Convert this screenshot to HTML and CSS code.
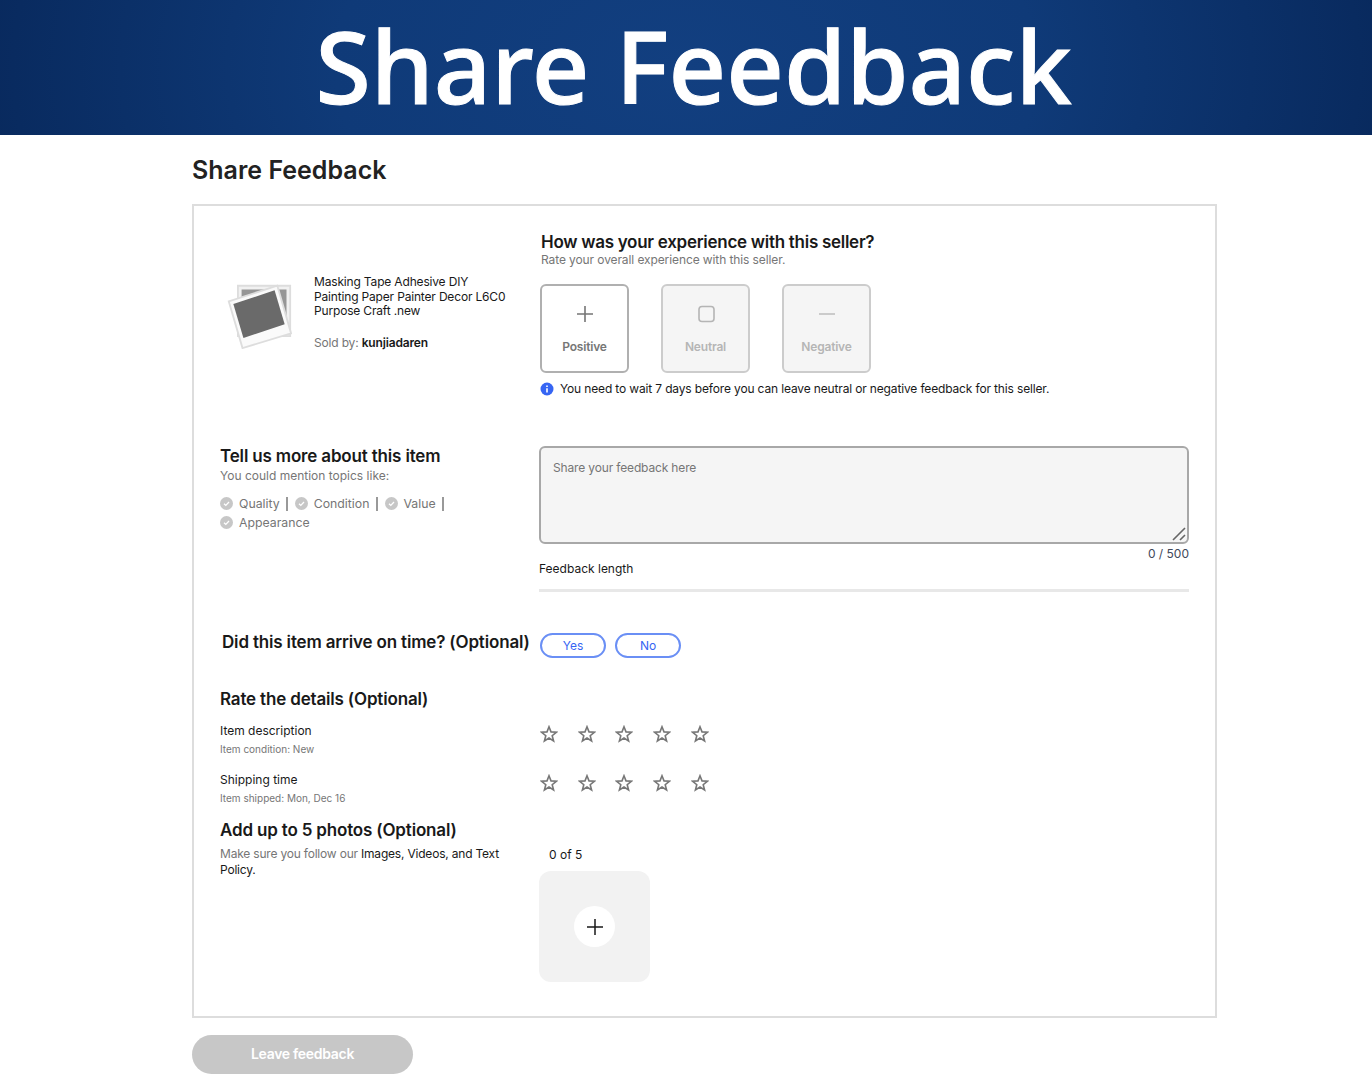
FILE: index.html
```html
<!DOCTYPE html>
<html lang="en">
<head>
  <title>Share Feedback</title>
  <meta charset="utf-8">
  <link rel="stylesheet" href="styles.css">
</head>
<body>
  <header class="banner"><h1>Share Feedback</h1></header>

  <main class="page">
    <h2 class="page_title">Share Feedback</h2>

    <form class="card">
      <!-- seller rating -->
      <section class="row row_seller">
        <div class="item">
          <svg class="item_pic" width="66" height="66" viewBox="0 0 72 72">
            <path d="M13 3 L70 3 L70 58 L13 58 Z" fill="#f1f1f1" stroke="#ddd" stroke-width="2"/>
            <path d="M17 7 L66 7 L66 50 L17 50 Z" fill="#969696"/>
            <path d="M3 20 L56 3 L71 55 L18 71 Z" fill="#fafafa" stroke="#ddd" stroke-width="2"/>
            <path d="M8 23 L53 8 L64 45 L19 60 Z" fill="#6a6a6a"/>
          </svg>
          <div class="item_text">
            <p>Masking Tape Adhesive DIY Painting Paper Painter Decor L6C0 Purpose Craft .new</p>
            <p class="sold"><span class="muted">Sold by:</span> <b>kunjiadaren</b></p>
          </div>
        </div>
        <div class="seller">
          <h3>How was your experience with this seller?</h3>
          <p class="hint">Rate your overall experience with this seller.</p>
          <div class="choices">
            <button type="button" class="choice choice_on">
              <svg width="20" height="20" viewBox="0 0 20 20"><path d="M10 2 V18 M2 10 H18" stroke="#767676" stroke-width="1.6" fill="none"/></svg>
              <span>Positive</span>
            </button>
            <button type="button" class="choice">
              <svg width="20" height="20" viewBox="0 0 20 20"><rect x="3" y="2.5" width="15" height="15" rx="3" stroke="#b5b5b5" stroke-width="1.6" fill="none"/></svg>
              <span>Neutral</span>
            </button>
            <button type="button" class="choice">
              <svg width="20" height="20" viewBox="0 0 20 20"><path d="M2 10 H18" stroke="#c0c0c0" stroke-width="1.6" fill="none"/></svg>
              <span>Negative</span>
            </button>
          </div>
          <p class="notice">
            <svg width="14" height="14" viewBox="0 0 14 14"><circle cx="7" cy="7" r="6.5" fill="#3665f3"/><path d="M7 6.2 V10.4 M7 3.6 V5" stroke="#fff" stroke-width="1.6" fill="none"/></svg>
            You need to wait 7 days before you can leave neutral or negative feedback for this seller.
          </p>
        </div>
      </section>

      <!-- written feedback -->
      <section class="row row_more">
        <div>
          <h3>Tell us more about this item</h3>
          <p class="hint hint_more">You could mention topics like:</p>
          <ul class="topics">
            <li><svg class="tick" width="13" height="13" viewBox="0 0 13 13"><circle cx="6.5" cy="6.5" r="6.5" fill="#c7c7c7"/><path d="M4 6.7 L5.8 8.4 L9 5" stroke="#fff" stroke-width="1.3" fill="none"/></svg>Quality<i></i></li>
            <li><svg class="tick" width="13" height="13" viewBox="0 0 13 13"><circle cx="6.5" cy="6.5" r="6.5" fill="#c7c7c7"/><path d="M4 6.7 L5.8 8.4 L9 5" stroke="#fff" stroke-width="1.3" fill="none"/></svg>Condition<i></i></li>
            <li><svg class="tick" width="13" height="13" viewBox="0 0 13 13"><circle cx="6.5" cy="6.5" r="6.5" fill="#c7c7c7"/><path d="M4 6.7 L5.8 8.4 L9 5" stroke="#fff" stroke-width="1.3" fill="none"/></svg>Value<i></i></li>
            <li><svg class="tick" width="13" height="13" viewBox="0 0 13 13"><circle cx="6.5" cy="6.5" r="6.5" fill="#c7c7c7"/><path d="M4 6.7 L5.8 8.4 L9 5" stroke="#fff" stroke-width="1.3" fill="none"/></svg>Appearance</li>
          </ul>
        </div>
        <div>
          <div class="feedback_wrap">
            <textarea class="feedback" placeholder="Share your feedback here"></textarea>
            <svg class="grip" width="14" height="14" viewBox="0 0 14 14"><path d="M1 13 L13 1 M8 13 L13 8" stroke="#666" stroke-width="1.6" fill="none"/></svg>
          </div>
          <div class="count">0 / 500</div>
          <div class="length_label">Feedback length</div>
          <div class="length_bar"></div>
        </div>
      </section>

      <!-- on time -->
      <section class="row row_time">
        <h3>Did this item arrive on time? (Optional)</h3>
        <div class="pills">
          <button type="button" class="pill">Yes</button>
          <button type="button" class="pill">No</button>
        </div>
      </section>

      <!-- stars -->
      <section class="details">
        <h3>Rate the details (Optional)</h3>
        <div class="row row_rate">
          <div>
            <div class="rate_name">Item description</div>
            <div class="rate_sub">Item condition: New</div>
          </div>
          <div class="stars">
            <svg viewBox="0 0 18 18"><path id="star" d="M9 1.8 L11 6.9 L16.5 7.2 L12.2 10.7 L13.6 16 L9 13 L4.4 16 L5.8 10.7 L1.5 7.2 L7 6.9 Z"/></svg>
            <svg viewBox="0 0 18 18"><use href="#star"/></svg>
            <svg viewBox="0 0 18 18"><use href="#star"/></svg>
            <svg viewBox="0 0 18 18"><use href="#star"/></svg>
            <svg viewBox="0 0 18 18"><use href="#star"/></svg>
          </div>
        </div>
        <div class="row row_rate">
          <div>
            <div class="rate_name">Shipping time</div>
            <div class="rate_sub">Item shipped: Mon, Dec 16</div>
          </div>
          <div class="stars">
            <svg viewBox="0 0 18 18"><use href="#star"/></svg>
            <svg viewBox="0 0 18 18"><use href="#star"/></svg>
            <svg viewBox="0 0 18 18"><use href="#star"/></svg>
            <svg viewBox="0 0 18 18"><use href="#star"/></svg>
            <svg viewBox="0 0 18 18"><use href="#star"/></svg>
          </div>
        </div>
      </section>

      <!-- photos -->
      <section class="row row_photos">
        <div>
          <h3>Add up to 5 photos (Optional)</h3>
          <p class="policy"><span class="muted">Make sure you follow our</span> Images, Videos, and Text Policy.</p>
        </div>
        <div>
          <div class="photo_count">0 of 5</div>
          <div class="photo_box">
            <span class="photo_add">
              <svg width="18" height="18" viewBox="0 0 18 18"><path d="M9 1 V17 M1 9 H17" stroke="#191919" stroke-width="1.5" fill="none"/></svg>
            </span>
          </div>
        </div>
      </section>
    </form>

    <button type="button" class="submit">Leave feedback</button>
  </main>
</body>
</html>
```

FILE: styles.css
```css
*, ::before, ::after {
  box-sizing: border-box;
  margin: 0; padding: 0;
}

body {
  font-family: "Inter", "Liberation Sans", sans-serif;
  font-size: 12px;
  color: #191919;
  background: #fff;
}

.banner {
  height: 135px;
  padding-left: 15px;
  background: radial-gradient(ellipse 780px 500px at 50% 50%, #123f80 0%, #0f3a78 45%, #072658 100%);
  text-align: center;
}
.banner h1 {
  font-family: "Noto Sans", sans-serif;
  font-size: 100.5px;
  font-weight: 500;
  line-height: 131px;
  color: #fff;
  -webkit-text-stroke: 1px #fff;
}

.page {
  width: 1025px;
  margin-left: 192px;
}
.page_title {
  font-size: 25px;
  font-weight: 600;
  line-height: 30px;
  margin-top: 20px;
  color: #222;
}

.card {
  height: 814px;
  margin-top: 19px;
  padding: 26px 26px 0;
  border: 2px solid #ddd;
}

h3 {
  font-size: 17px;
  font-weight: 600;
  line-height: 20px;
  letter-spacing: -.17px;
}
.hint, .muted {
  color: #767676;
}
.hint {
  font-size: 12px;
  line-height: 14px;
}

.row {
  display: grid;
  grid-template-columns: 319px 650px;
}

/* 상단 판매자 평가 */
.item {
  display: flex;
  align-items: flex-start;
  gap: 22px;
  padding: 43px 0 0 6px;
}
.item_pic {
  flex: none;
  margin-top: 8px;
}
.item_text {
  width: 194px;
  font-size: 12px;
  line-height: 14.7px;
  letter-spacing: -.17px;
}
.sold {
  margin-top: 17px;
}
.sold b {
  font-weight: 600;
}
.seller h3 {
  margin-left: 2px;
  letter-spacing: -.28px;
}
.seller .hint {
  margin: 1px 0 0 2px;
  letter-spacing: -.1px;
}
.choices {
  display: flex;
  gap: 32px;
  margin: 17px 0 0 1px;
}
.choice {
  display: flex;
  flex-direction: column;
  align-items: center;
  width: 89px;
  height: 89px;
  padding-top: 18px;
  border: 2px solid #ccc;
  border-radius: 6px;
  background: #f5f5f5;
  font: 600 12px "Inter", sans-serif;
  letter-spacing: -.2px;
  color: #b5b5b5;
}
.choice span {
  margin-top: 15px;
}
.choice_on {
  border-color: #b0b0b0;
  background: #fff;
  color: #767676;
}
.notice {
  display: flex;
  align-items: center;
  gap: 6px;
  margin: 9px 0 0 1px;
  font-size: 12px;
  line-height: 14px;
  letter-spacing: -.15px;
}

/* 피드백 입력 */
.row_more {
  margin-top: 50px;
}
.hint_more {
  margin-top: 3px;
}
.topics {
  display: flex;
  flex-wrap: wrap;
  width: 240px;
  margin-top: 11px;
  list-style: none;
  color: #767676;
  font-size: 12.3px;
  line-height: 19px;
}
.topics li {
  display: flex;
  align-items: center;
}
.tick {
  margin-right: 6px;
}
.topics i {
  width: 2px;
  height: 14px;
  margin: 0 7px 0 6px;
  background: #999;
}
.feedback_wrap {
  position: relative;
}
.feedback {
  display: block;
  width: 650px;
  height: 98px;
  padding: 12px;
  border: 2px solid #a8a8a8;
  border-radius: 6px;
  background: #f5f5f5;
  font: 12px "Inter", sans-serif;
  letter-spacing: -.15px;
  resize: none;
}
.feedback::placeholder {
  color: #767676;
}
/* 크기 조절 핸들처럼 보이는 아이콘 */
.grip {
  position: absolute;
  right: 3px;
  bottom: 3px;
}
.count {
  margin-top: 2px;
  text-align: right;
  line-height: 15px;
  color: #41485a;
}
.length_label {
  line-height: 15px;
}
.length_bar {
  height: 3px;
  margin-top: 13px;
  background: #e8e8e8;
}

/* 도착 여부 */
.row_time {
  margin-top: 41px;
  align-items: start;
}
.row_time h3 {
  margin: -1px 0 0 2px;
  white-space: nowrap;
}
.pills {
  display: flex;
  gap: 9px;
  margin-left: 1px;
}
.pill {
  width: 66px;
  height: 25px;
  border: 2px solid #6a8ff5;
  border-radius: 13px;
  background: #fff;
  font: 12px "Inter", sans-serif;
  color: #3665f3;
}

/* 별점 */
.details {
  margin-top: 31px;
}
.row_rate {
  height: 49px;
}
.details > h3 {
  margin-bottom: 14px;
}
.rate_name {
  line-height: 16px;
}
.rate_sub {
  margin-top: 4px;
  font-size: 10px;
  line-height: 13px;
  color: #767676;
}
.stars {
  display: flex;
  gap: 19.7px;
  padding-top: 2px;
  margin-left: 1px;
}
.stars svg {
  width: 18px;
  height: 18px;
  fill: none;
  stroke: #777;
  stroke-width: 1.6;
}

/* 사진 */
.row_photos {
  margin-top: -1px;
}
.policy {
  width: 300px;
  margin-top: 6px;
  line-height: 15.5px;
  letter-spacing: -.2px;
}
.photo_count {
  margin: 27px 0 0 10px;
  line-height: 15px;
}
.photo_box {
  display: flex;
  align-items: center;
  justify-content: center;
  width: 111px;
  height: 111px;
  margin-top: 9px;
  border-radius: 12px;
  background: #f2f2f2;
}
.photo_add {
  display: flex;
  align-items: center;
  justify-content: center;
  width: 41px;
  height: 41px;
  border-radius: 50%;
  background: #fff;
}

.submit {
  display: block;
  width: 221px;
  height: 39px;
  margin-top: 17px;
  padding-bottom: 3px;
  border: 0;
  border-radius: 20px;
  background: #c7c7c7;
  font: 600 14px "Inter", sans-serif;
  letter-spacing: -.3px;
  color: #fff;
}
```
